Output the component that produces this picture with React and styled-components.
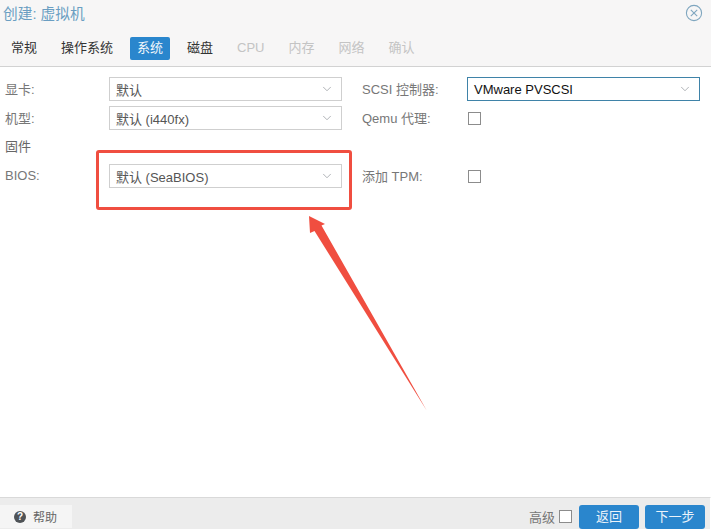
import React from "react";
import styled, { createGlobalStyle } from "styled-components";
import { ChevronDown } from "lucide-react";

const GlobalStyle = createGlobalStyle`
  html, body {
    margin: 0;
    padding: 0;
    background: #fff;
  }
  body {
    font-family: "Liberation Sans", "Noto Sans CJK SC", sans-serif;
    font-size: 13px;
  }
`;

const tabs = [
  { title: "常规" },
  { title: "操作系统" },
  { title: "系统", active: true },
  { title: "磁盘" },
  { title: "CPU", disabled: true },
  { title: "内存", disabled: true },
  { title: "网络", disabled: true },
  { title: "确认", disabled: true },
];

function Select({ value, focused }) {
  return (
    <SelectBox $focused={focused}>
      <SelectText $focused={focused}>{value}</SelectText>
      <ChevronDown size={14} strokeWidth={1.2} color="#8f9499" />
    </SelectBox>
  );
}

function App() {
  return (
    <Dialog>
      <GlobalStyle />
      <Header>
        <TitleRow>
          <Title>创建: 虚拟机</Title>
          <CloseIcon viewBox="0 0 18 18">
            <circle cx="9" cy="9" r="7.6" fill="none" stroke="#7fa6bf" strokeWidth="1.1" />
            <path d="M5.8 5.8 L12.2 12.2 M12.2 5.8 L5.8 12.2" stroke="#7fa6bf" strokeWidth="1.1" />
          </CloseIcon>
        </TitleRow>
        <TabBar>
          {tabs.map((tab) => (
            <Tab key={tab.title} $active={tab.active} $disabled={tab.disabled}>
              {tab.title}
            </Tab>
          ))}
        </TabBar>
      </Header>

      <Content>
        <FormRow>
          <Label>显卡:</Label>
          <Select value="默认" />
          <SideLabel>SCSI 控制器:</SideLabel>
          <Select value="VMware PVSCSI" focused />
        </FormRow>
        <FormRow>
          <Label>机型:</Label>
          <Select value="默认 (i440fx)" />
          <SideLabel>Qemu 代理:</SideLabel>
          <Checkbox />
        </FormRow>
        <SectionTitle>固件</SectionTitle>
        <FormRow>
          <Label>BIOS:</Label>
          <Select value="默认 (SeaBIOS)" />
          <SideLabel>添加 TPM:</SideLabel>
          <Checkbox />
        </FormRow>
        <Highlight />
        <Arrow viewBox="0 0 711 529">
          <path d="M309 216 L325 224 L321.5 225.5 L427 411 L314.5 231 L310 233 Z" fill="#f04e40" />
        </Arrow>
      </Content>

      <Footer>
        <HelpButton>
          <HelpIcon>?</HelpIcon>
          帮助
        </HelpButton>
        <FooterRight>
          <AdvancedLabel>高级</AdvancedLabel>
          <FooterCheckbox />
          <PrimaryButton>返回</PrimaryButton>
          <PrimaryButton>下一步</PrimaryButton>
        </FooterRight>
      </Footer>
    </Dialog>
  );
}

const Dialog = styled.div`
  position: relative;
  width: 711px;
  height: 529px;
  display: flex;
  flex-direction: column;
  overflow: hidden;
  background: #fff;
`;

const Header = styled.div`
  height: 66px;
  flex: none;
  background: #f7f6f6;
  border-bottom: 1px solid #d2d2d2;
  display: flex;
  flex-direction: column;
`;

const TitleRow = styled.div`
  height: 37px;
  display: flex;
  align-items: center;
  justify-content: space-between;
  padding: 0 8px 0 3px;
`;

const Title = styled.div`
  font-size: 14.7px;
  color: #6a9ec2;
  margin-top: -13px;
`;

const CloseIcon = styled.svg`
  width: 18px;
  height: 18px;
  margin-top: -11px;
`;

const TabBar = styled.div`
  display: flex;
  padding-left: 4px;
`;

const Tab = styled.div`
  height: 23px;
  line-height: 22px;
  padding: 0 7px;
  margin-right: 10px;
  border-radius: 2px;
  white-space: nowrap;
  background: ${(p) => (p.$active ? "#2a86cd" : "transparent")};
  color: ${(p) => (p.$active ? "#f2f7fb" : p.$disabled ? "#c4c4c4" : "#333")};
`;

const Content = styled.div`
  flex: 1;
  padding-top: 10px;
  display: flex;
  flex-direction: column;
`;

const FormRow = styled.div`
  height: 24px;
  margin-bottom: 5px;
  display: flex;
  align-items: center;
  padding-left: 5px;
`;

const Label = styled.div`
  width: 104px;
  flex: none;
  padding-bottom: 2px;
  color: #777;
`;

const SideLabel = styled.div`
  width: 105px;
  flex: none;
  margin-left: 20px;
  padding-bottom: 2px;
  color: #777;
  white-space: nowrap;
`;

const SectionTitle = styled.div`
  height: 24px;
  margin: 0 0 5px 5px;
  line-height: 24px;
  color: #666;
`;

const SelectBox = styled.div`
  width: 233px;
  height: 24px;
  box-sizing: border-box;
  flex: none;
  display: flex;
  align-items: center;
  justify-content: space-between;
  padding: 0 7px 0 6px;
  background: #fff;
  border: 1px solid ${(p) => (p.$focused ? "#3f83a8" : "#cfcfcf")};
`;

const SelectText = styled.span`
  color: ${(p) => (p.$focused ? "#111" : "#555")};
`;

const Checkbox = styled.div`
  width: 11px;
  height: 11px;
  flex: none;
  margin: 0 0 0 1px;
  background: #fff;
  border: 1px solid #8c8c8c;
`;

const Highlight = styled.div`
  position: absolute;
  left: 96px;
  top: 150px;
  width: 256px;
  height: 60px;
  box-sizing: border-box;
  border: 3px solid #f04e40;
  border-radius: 3px;
  pointer-events: none;
`;

const Arrow = styled.svg`
  position: absolute;
  left: 0;
  top: 0;
  width: 711px;
  height: 529px;
  pointer-events: none;
`;

const Footer = styled.div`
  height: 32px;
  box-sizing: border-box;
  flex: none;
  background: #ececec;
  border-top: 1px solid #d9d9d9;
  border-right: 1px solid #fff;
  display: flex;
  align-items: center;
  justify-content: space-between;
  padding: 6px 5px 0 0;
`;

const HelpButton = styled.div`
  width: 72px;
  height: 23px;
  box-sizing: border-box;
  display: flex;
  align-items: center;
  padding-left: 14px;
  gap: 7px;
  background: #f5f5f5;
  color: #666;
  font-size: 12px;
`;

const HelpIcon = styled.span`
  width: 12px;
  height: 12px;
  border-radius: 50%;
  background: #4f5357;
  color: #fff;
  font-size: 10px;
  font-weight: bold;
  line-height: 12px;
  text-align: center;
`;

const FooterRight = styled.div`
  display: flex;
  align-items: center;
`;

const AdvancedLabel = styled.span`
  color: #777;
  margin-right: 4px;
`;

const FooterCheckbox = styled(Checkbox)`
  margin: 0 7px 0 0;
`;

const PrimaryButton = styled.div`
  width: 60px;
  height: 24px;
  line-height: 24px;
  text-align: center;
  border-radius: 3px;
  background: #2a86cd;
  color: #eaf3fa;
  & + & {
    margin-left: 6px;
  }
`;

export default App;
